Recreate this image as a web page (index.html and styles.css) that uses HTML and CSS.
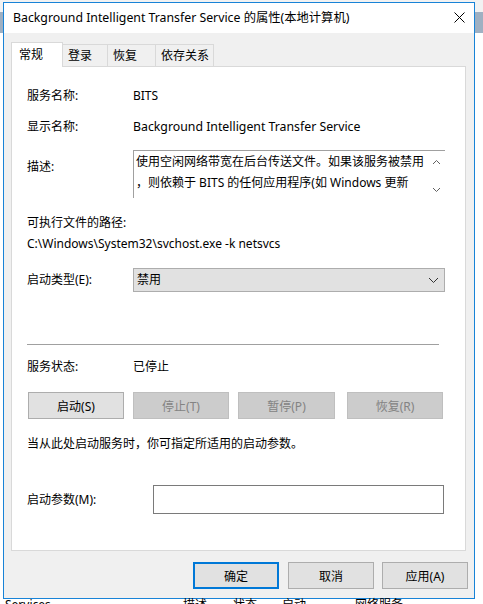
FILE: index.html
```html
<!DOCTYPE html>
<html lang="zh-CN">
<head>
    <meta charset="UTF-8">
    <meta name="viewport" content="width=device-width, initial-scale=1.0">
    <title>BITS 的属性</title>
    <link rel="stylesheet" href="styles.css">
</head>
<body>
<div class="dialog">
    <div class="titlebar">
        <span class="title">Background Intelligent Transfer Service 的属性(本地计算机)</span>
        <svg class="close" width="11" height="11" viewBox="0 0 11 11"><path d="M0.5 0.5 L10.5 10.5 M10.5 0.5 L0.5 10.5" stroke="#000" stroke-width="1"/></svg>
    </div>
    <div class="dialog-body">
        <div class="tabs">
            <div class="tab active">常规</div>
            <div class="tab">登录</div>
            <div class="tab t3">恢复</div>
            <div class="tab t4">依存关系</div>
        </div>
        <div class="panel">
            <div class="row r-name"><span class="label">服务名称:</span><span>BITS</span></div>
            <div class="row r-display"><span class="label">显示名称:</span><span>Background Intelligent Transfer Service</span></div>
            <div class="row r-desc">
                <span class="label desc-label">描述:</span>
                <div class="desc-box">
                    <div class="desc-text">使用空闲网络带宽在后台传送文件。如果该服务被禁用<br>，则依赖于 BITS 的任何应用程序(如 Windows 更新</div>
                    <div class="scroll">
                        <svg width="9" height="6" viewBox="0 0 9 6"><path d="M1 5 L4.5 1.5 L8 5" fill="none" stroke="#606060" stroke-width="1"/></svg>
                        <svg width="9" height="6" viewBox="0 0 9 6"><path d="M1 1 L4.5 4.5 L8 1" fill="none" stroke="#606060" stroke-width="1"/></svg>
                    </div>
                </div>
            </div>
            <div class="path-label">可执行文件的路径:</div>
            <div class="path">C:\Windows\System32\svchost.exe -k netsvcs</div>
            <div class="row r-type">
                <span class="label">启动类型(E):</span>
                <div class="combo">
                    <span>禁用</span>
                    <svg width="11" height="7" viewBox="0 0 11 7"><path d="M1 1 L5.5 5.5 L10 1" fill="none" stroke="#333" stroke-width="1"/></svg>
                </div>
            </div>
            <div class="separator"></div>
            <div class="row r-status"><span class="label">服务状态:</span><span>已停止</span></div>
            <div class="service-buttons">
                <div class="btn">启动(S)</div>
                <div class="btn disabled">停止(T)</div>
                <div class="btn disabled b3">暂停(P)</div>
                <div class="btn disabled b4">恢复(R)</div>
            </div>
            <div class="note">当从此处启动服务时，你可指定所适用的启动参数。</div>
            <div class="row r-param">
                <span class="label param-label">启动参数(M):</span>
                <div class="param-input"></div>
            </div>
        </div>
        <div class="footer">
            <div class="btn default">确定</div>
            <div class="btn cancel">取消</div>
            <div class="btn">应用(A)</div>
        </div>
    </div>
</div>
<div class="behind">
    <span class="c1">Services</span>
    <span class="c2">描述</span>
    <span class="c3">状态</span>
    <span class="c4">启动</span>
    <span class="c5">网络服务</span>
</div>
</body>
</html>
```

FILE: styles.css
```css
body {
    margin: 0;
    width: 483px;
    height: 604px;
    overflow: hidden;
    font-family: "Noto Sans", "Noto Sans CJK SC", sans-serif;
    font-size: 12px;
    color: #000;
    background: linear-gradient(#f2f2f2 0, #f2f2f2 12px, #9fb0c2 12px, #9fb0c2 33px, #fff 33px);
}
.dialog {
    margin: 2px 0 0 3px;
    width: 472px;
    height: 597px;
    box-sizing: border-box;
    border: 1px solid #1883d7;
    background-color: #f0f0f0;
    display: flex;
    flex-direction: column;
}
.titlebar {
    height: 30px;
    flex: none;
    background-color: #fff;
    display: flex;
    align-items: center;
    justify-content: space-between;
    padding: 0 9px 0 9px;
}
.title {
    font-size: 12.3px;
    line-height: 16px;
    margin-top: -1px;
}
.close {
    display: block;
    margin-top: -2px;
}
.dialog-body {
    flex: 1;
    padding: 9px 8px 0 7px;
    display: flex;
    flex-direction: column;
}
.tabs {
    display: flex;
    align-items: flex-end;
    height: 24px;
    position: relative;
    z-index: 1;
}
.tab {
    box-sizing: border-box;
    height: 22px;
    line-height: 21px;
    padding-left: 5px;
    width: 46px;
    background-color: #f0f0f0;
    border: 1px solid #d9d9d9;
    border-bottom: none;
    margin-left: -1px;
}
.tab.active {
    width: 52px;
    height: 25px;
    margin-left: 0;
    margin-bottom: -1px;
    padding-left: 7px;
    line-height: 23px;
    background-color: #fff;
    z-index: 2;
    position: relative;
}
.tab.t3 { width: 49px; }
.tab.t4 { width: 59px; }
.panel {
    height: 485px;
    box-sizing: border-box;
    background-color: #fff;
    border: 1px solid #d9d9d9;
    padding: 19px 0 0 15px;
}
.row {
    display: flex;
    align-items: center;
    line-height: 20px;
}
.label {
    width: 106px;
    flex: none;
}
.r-display { margin-top: 11px; }
.r-display span:last-child { font-size: 12.3px; }
.r-desc {
    margin-top: 13px;
    align-items: flex-start;
}
.desc-label { padding-top: 7px; }
.desc-box {
    width: 312px;
    height: 48px;
    box-sizing: border-box;
    border-top: 1px solid #a0a0a0;
    border-left: 1px solid #a0a0a0;
    display: flex;
}
.desc-text {
    flex: 1;
    line-height: 21px;
    padding: 0 0 0 2px;
    height: 46px;
    overflow: hidden;
    white-space: nowrap;
}
.scroll {
    width: 17px;
    flex: none;
    display: flex;
    flex-direction: column;
    justify-content: space-between;
    align-items: center;
    padding: 8px 0 5px;
}
.scroll svg { display: block; }
.path-label {
    margin-top: 15px;
    line-height: 20px;
}
.path {
    margin-top: 1px;
    line-height: 20px;
}
.r-type { margin-top: 14px; }
.combo {
    width: 312px;
    height: 24px;
    box-sizing: border-box;
    background-color: #e1e1e1;
    border: 1px solid #adadad;
    display: flex;
    align-items: center;
    justify-content: space-between;
    padding: 0 5px 0 3px;
}
.separator {
    margin: 52px 0 0 0;
    width: 412px;
    height: 1px;
    background-color: #a0a0a0;
}
.r-status { margin-top: 12px; }
.service-buttons {
    display: flex;
    margin-top: 15px;
    padding-left: 1px;
}
.btn {
    box-sizing: border-box;
    width: 96px;
    height: 27px;
    background-color: #e1e1e1;
    border: 1px solid #adadad;
    display: flex;
    align-items: center;
    justify-content: center;
}
.service-buttons .btn { margin-right: 9px; }
.service-buttons .b3 { width: 97px; margin-right: 12px; }
.btn.disabled {
    background-color: #cccccc;
    border-color: #bfbfbf;
    color: #838383;
}
.note {
    margin-top: 15px;
    line-height: 20px;
}
.r-param { margin-top: 31px; }
.param-label { width: 126px; }
.param-input {
    width: 291px;
    height: 29px;
    box-sizing: border-box;
    border: 1px solid #7a7a7a;
    background-color: #fff;
}
.footer {
    display: flex;
    justify-content: flex-end;
    margin-top: 11px;
    margin-right: -2px;
}
.footer .btn {
    width: 86px;
    margin-left: 8px;
}
.footer .cancel { margin-left: 9px; }
.btn.default {
    border: 2px solid #0078d7;
}
.behind {
    position: relative;
    height: 20px;
    font-size: 12px;
    line-height: 14px;
    margin-top: -1px;
}
.behind span {
    position: absolute;
    top: 0;
}
.behind .c1 { left: 5px; }
.behind .c2 { left: 183px; }
.behind .c3 { left: 233px; }
.behind .c4 { left: 282px; }
.behind .c5 { left: 355px; }
```
